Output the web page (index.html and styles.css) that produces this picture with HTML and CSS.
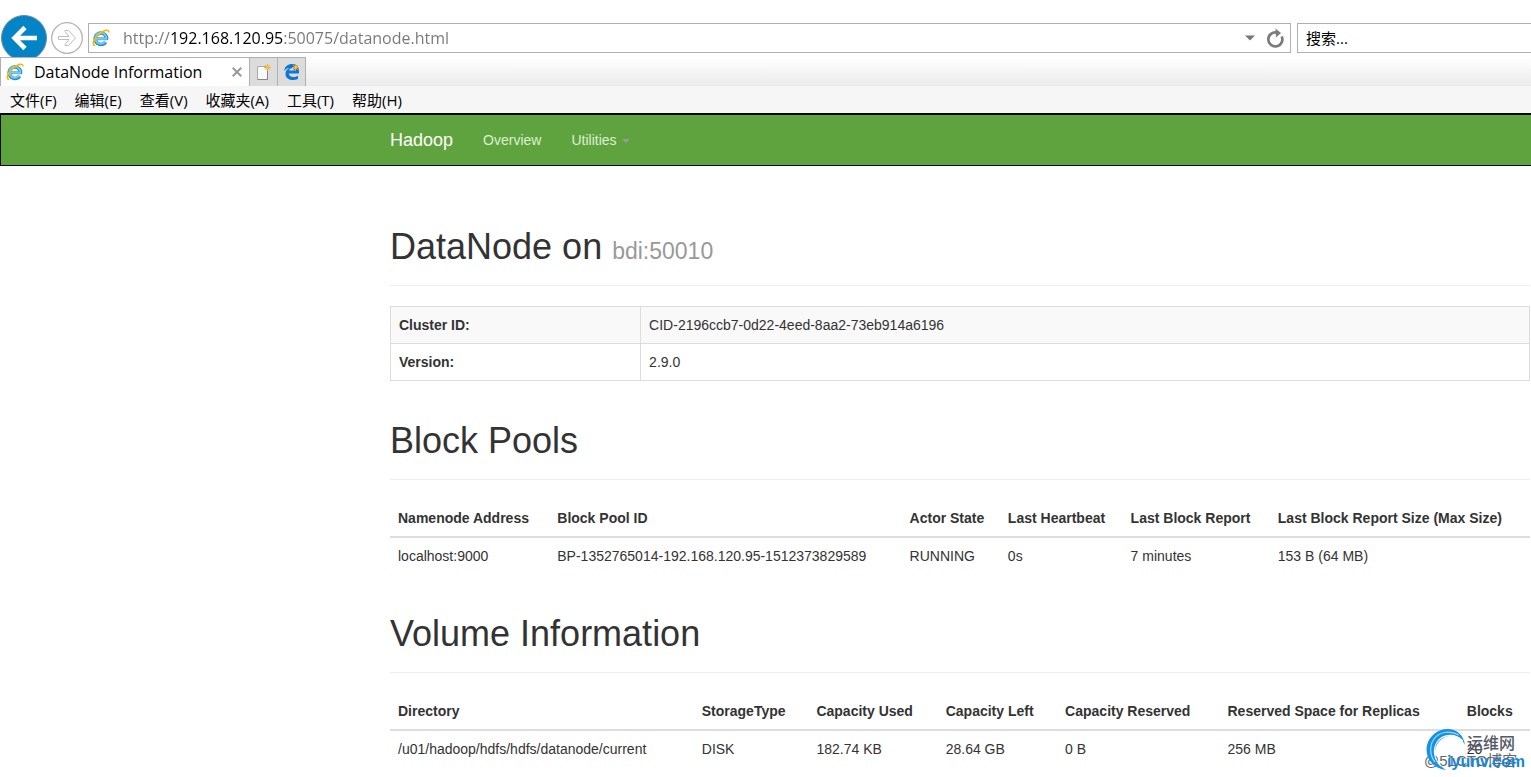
FILE: index.html
```
<!DOCTYPE html>
<html lang="zh-CN">
<head>
<meta charset="utf-8">
<title>DataNode Information</title>
<link rel="stylesheet" href="styles.css">
</head>
<body>
<svg class="symbols" aria-hidden="true">
  <symbol id="ie" viewBox="0 0 18 18">
    <path d="M14.6 10.2A5.7 5.7 0 1 0 13.6 13" fill="none" stroke="#2c8fc4" stroke-width="3.6"/>
    <path d="M4 9.8H16" fill="none" stroke="#2c8fc4" stroke-width="2.8"/>
    <path d="M14.4 9.8A5.6 5.6 0 1 0 13.2 12.8M4 9.8H15" fill="none" stroke="#74cdf3" stroke-width="1.8"/>
    <path d="M2.6 16.3C-.4 15.4 2 9.6 7 5.2 11.600 1.200 16.600 0 16.800 2.800" fill="none" stroke="#f2b90f" stroke-width="1.7" stroke-linecap="round"/>
  </symbol>
  <symbol id="spark" viewBox="0 0 8 8">
    <path d="M4 0V8M0 4H8M1.200 1.200L6.800 6.800M6.800 1.200L1.200 6.800" stroke="#f5a623" stroke-width="1.1"/>
    <circle cx="4" cy="4" r="2" fill="#ffb93a"/>
  </symbol>
</svg>
<header class="browser">
  <div class="toolbar">
    <button class="back" aria-label="Back"><svg viewBox="0 0 46 46"><circle cx="23" cy="23" r="22.500" fill="#0384c6" stroke="#6f8b9b"/><path d="M36 23H13M24 12.500L13.500 23L24 33.500" fill="none" stroke="#fff" stroke-width="4.600"/></svg></button>
    <button class="forward" aria-label="Forward"><svg viewBox="0 0 32 32"><circle cx="16" cy="16" r="15.300" fill="#fff" stroke="#b4b4b4" stroke-width="1.300"/><path d="M7.500 14.500H18L14 9.500V8.500H17.500L24.500 16L17.500 23.500H14V22.500L18 17.500H7.500Z" fill="#fff" stroke="#bdbdbd"/></svg></button>
    <div class="address">
      <svg class="ie-icon" aria-hidden="true"><use href="#ie"/></svg>
      <input class="url" type="text" aria-label="Address" value="http://192.168.120.95:50075/datanode.html">
      <button class="drop" aria-label="Show address history"><svg viewBox="0 0 10 6"><path d="M0 .5H10L5 5.500Z" fill="#777"/></svg></button>
      <button class="reload" aria-label="Refresh"><svg viewBox="0 0 18 20"><path d="M11 4.600A7 7 0 1 0 15.700 8.500" fill="none" stroke="#7b7b7b" stroke-width="2.700"/><path d="M9.500 .5L15 5L10 9.500Z" fill="#7b7b7b"/></svg></button>
    </div>
    <input class="search" type="text" aria-label="搜索" placeholder="搜索...">
  </div>
  <div class="tabs">
    <div class="tab">
      <svg class="ie-icon" aria-hidden="true"><use href="#ie"/></svg>
      <span class="tab-title">DataNode Information</span>
      <button class="close" aria-label="Close tab"><svg viewBox="0 0 10 10"><path d="M.7 .7L9.300 9.300M9.300 .7L.7 9.300" stroke="#999" stroke-width="2"/></svg></button>
    </div>
    <button class="tab-button" aria-label="New tab"><svg viewBox="0 0 18 18"><path d="M2.500 3.500H12.500V16.500H2.500Z" fill="#fafafa" stroke="#aaa"/><path d="M12.500 7V16.500H2.500" fill="none" stroke="#888"/><use href="#spark" x="9" y="1" width="7" height="7"/></svg></button>
    <button class="tab-button" aria-label="Open Edge"><svg viewBox="0 0 18 18"><path d="M1 8C2 3 5 1 9 1C14 1 16.500 5 16 10.500H5.800C6.500 15 12 14.500 15 12.700V16C10 18.300 2.500 17 2.500 11C2.500 8 4 6 6.500 5C4 5 2 6.500 1 8ZM6 7.500H11.500C11.500 4 7 4 6 7.500Z" fill="#0a78d4" fill-rule="evenodd"/><use href="#spark" x="9" y="1" width="7" height="7"/></svg></button>
  </div>
  <nav class="menu">
    <button>文件(F)</button><button>编辑(E)</button><button>查看(V)</button><button>收藏夹(A)</button><button>工具(T)</button><button>帮助(H)</button>
  </nav>
</header>
<nav class="navbar">
  <a class="brand" href="#">Hadoop</a>
  <a class="nav-link" href="#">Overview</a>
  <a class="nav-link" href="#">Utilities <span class="caret"></span></a>
</nav>
<main class="container">
  <div class="page-header"><h1>DataNode on <small>bdi:50010</small></h1></div>
  <table class="table bordered">
    <tbody>
      <tr><th scope="row">Cluster ID:</th><td>CID-2196ccb7-0d22-4eed-8aa2-73eb914a6196</td></tr>
      <tr><th scope="row">Version:</th><td>2.9.0</td></tr>
    </tbody>
  </table>
  <div class="page-header"><h1>Block Pools</h1></div>
  <table class="table listing">
    <thead><tr><th>Namenode Address</th><th>Block Pool ID</th><th>Actor State</th><th>Last Heartbeat</th><th>Last Block Report</th><th>Last Block Report Size (Max Size)</th></tr></thead>
    <tbody><tr><td>localhost:9000</td><td>BP-1352765014-192.168.120.95-1512373829589</td><td>RUNNING</td><td>0s</td><td>7 minutes</td><td>153 B (64 MB)</td></tr></tbody>
  </table>
  <div class="page-header"><h1>Volume Information</h1></div>
  <table class="table listing">
    <thead><tr><th>Directory</th><th>StorageType</th><th>Capacity Used</th><th>Capacity Left</th><th>Capacity Reserved</th><th>Reserved Space for Replicas</th><th>Blocks</th></tr></thead>
    <tbody><tr><td>/u01/hadoop/hdfs/hdfs/datanode/current</td><td>DISK</td><td>182.74 KB</td><td>28.64 GB</td><td>0 B</td><td>256 MB</td><td>20</td></tr></tbody>
  </table>
</main>
<div class="watermark">
  <span class="wm-blog">@51CTO博客</span>
  <svg class="wm-logo" viewBox="0 0 40 42" aria-hidden="true">
    <path d="M39 16C37-1 19-4 8 5C-5 16-1 38 20 41C9 34 6 23 12 14C18 5 33 3 39 16Z" fill="#1592e6"/>
    <path d="M37 12C29 4 18 5 12 12C6 20 8 31 15 37" fill="none" stroke="#fff" stroke-width="1.200"/>
    <path d="M33 6C23 1 13 3 8 10C3 17 4 27 9 33" fill="none" stroke="#9bdcff" stroke-width="1.200"/>
  </svg>
  <span class="wm-name">运维网</span>
  <span class="wm-site">iyunv.com</span>
</div>
</body>
</html>
```
FILE: styles.css
```
* { box-sizing: border-box; }
html { overflow: hidden; }
body {
  position: relative;
  margin: 0;
  height: 100vh;
  overflow: hidden;
  background: #fff;
  color: #333;
  font: 14px/20px "Liberation Sans", Arial, sans-serif;
}
button { padding: 0; border: 0; background: none; font: inherit; color: inherit; }
svg { display: block; }
.symbols { position: absolute; width: 0; height: 0; }

.browser {
  color: #000;
  font-family: "Open Sans", "Noto Sans CJK SC", sans-serif;
}
.toolbar {
  display: flex;
  align-items: center;
  height: 57px;
  padding: 19px 0 0 1px;
  overflow: hidden;
}
.back { flex: none; width: 46px; height: 46px; }
.forward { flex: none; width: 32px; height: 32px; margin: 0 5px 0 4px; }
.address {
  display: flex;
  flex: 1;
  align-items: center;
  height: 30px;
  padding: 0 6px 0 3px;
  border: 1px solid #b0b0b0;
}
.ie-icon { flex: none; width: 18px; height: 18px; }
.url {
  flex: 1;
  min-width: 0;
  height: 28px;
  margin-left: 13px;
  padding: 0;
  border: 0;
  outline: 0;
  font: 16px "Open Sans", sans-serif;
  color: transparent;
  background: linear-gradient(90deg, #777 47px, #000 47px, #000 160px, #777 160px);
  -webkit-background-clip: text;
  background-clip: text;
}
.drop { width: 10px; margin-right: 11px; }
.reload { width: 18px; }
.search {
  flex: none;
  width: 234px;
  height: 30px;
  margin-left: 6px;
  padding: 0 8px;
  border: 1px solid #b0b0b0;
  border-right: 0;
  font: 15px "Open Sans", "Noto Sans CJK SC", sans-serif;
}
.search::placeholder { color: #000; }
.tabs {
  display: flex;
  height: 29px;
  background: linear-gradient(#fff, #ebebeb);
}
.tab {
  display: flex;
  align-items: center;
  width: 250px;
  padding: 0 7px 0 5px;
  border: 1px solid #b0b0b0;
  border-bottom: 0;
  background: #fff;
}
.tab-title { flex: 1; margin-left: 10px; font-size: 16px; white-space: nowrap; }
.close { width: 10px; }
.tab-button {
  display: flex;
  align-items: center;
  justify-content: center;
  width: 28px;
  border: 1px solid #b0b0b0;
  border-width: 1px 1px 0 0;
  background: #dcdcdc;
}
.tab-button svg { width: 18px; height: 18px; }
.menu {
  display: flex;
  gap: 18px;
  height: 27px;
  padding: 0 10px;
  background: #f6f6f6;
  font-size: 15px;
}

.navbar {
  display: flex;
  align-items: center;
  height: 53px;
  padding-left: 389px;
  border: 1px solid #080808;
  border-width: 2px 0 1px 1px;
  background: #5fa33e;
}
.navbar a { text-decoration: none; }
.brand { margin-right: 15px; color: #fff; font-size: 18px; }
.nav-link { padding: 0 15px; color: #dcf0d3; }
.caret {
  display: inline-block;
  margin-left: 2px;
  vertical-align: middle;
  border: 4px solid transparent;
  border-top-color: #999;
  border-bottom: 0;
}

.container { margin: 0 1px 0 390px; padding-top: 61px; }
.page-header {
  margin: 0 0 20px;
  padding-bottom: 9px;
  border-bottom: 1px solid #eee;
}
.table + .page-header { margin-top: 40px; }
h1 { margin: 0 0 10px; font-size: 36px; font-weight: 400; line-height: 39px; }
small { color: #999; font-size: 23px; line-height: 24px; }
.table { width: 100%; border-collapse: collapse; }
.table th, .table td { padding: 8px; text-align: left; vertical-align: top; }
.bordered th, .bordered td { border: 1px solid #ddd; }
.bordered tr:first-child { background: #f9f9f9; }
.listing thead { border-bottom: 2px solid #ddd; }

.watermark { position: absolute; right: 4px; bottom: 4px; width: 103px; height: 44px; }
.watermark > * { position: absolute; white-space: nowrap; }
.wm-blog { left: 0; bottom: 2px; color: #666; font: 15px/20px "Liberation Sans", "Noto Sans CJK SC", sans-serif; }
.wm-logo { left: 2px; top: 0; width: 40px; height: 42px; }
.wm-name { right: 12px; top: 3px; color: #555a66; font: 500 16px/20px "Noto Sans CJK SC", sans-serif; }
.wm-site { right: 2px; bottom: 1px; color: #1387e0; font: bold 16px/20px "Liberation Sans", sans-serif; }
```
